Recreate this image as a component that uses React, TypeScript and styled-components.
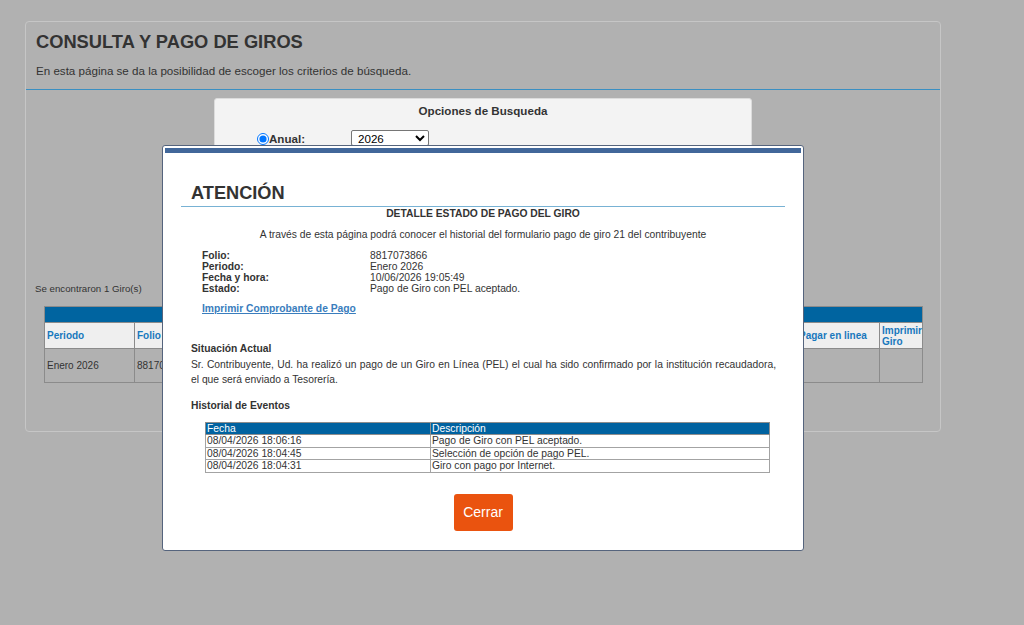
import { createGlobalStyle } from 'styled-components';
import styled from 'styled-components';

export default App;

type Evento = { fecha: string; descripcion: string };

const eventos: Evento[] = [
   { fecha: '08/04/2026 18:06:16', descripcion: 'Pago de Giro con PEL aceptado.' },
   { fecha: '08/04/2026 18:04:45', descripcion: 'Selección de opción de pago PEL.' },
   { fecha: '08/04/2026 18:04:31', descripcion: 'Giro con pago por Internet.' },
];

const detalle: [string, string][] = [
   ['Folio:', '8817073866'],
   ['Periodo:', 'Enero 2026'],
   ['Fecha y hora:', '10/06/2026 19:05:49'],
   ['Estado:', 'Pago de Giro con PEL aceptado.'],
];

// anchos de columna de la grilla de giros
const columnas = [
   { titulo: 'Periodo', ancho: 90 },
   { titulo: 'Folio', ancho: 80 },
   { titulo: 'Monto', ancho: 120 },
   { titulo: 'Vencimiento', ancho: 120 },
   { titulo: 'Estado', ancho: 170 },
   { titulo: 'Detalle', ancho: 172 },
   { titulo: 'Pagar en linea', ancho: 83 },
   { titulo: 'Imprimir Giro', ancho: 43 },
];

function App() {
   return (
      <>
         <GlobalStyle />
         <Page>
            <Card>
               <CardHeader>
                  <Title>CONSULTA Y PAGO DE GIROS</Title>
                  <Subtitle>
                     En esta página se da la posibilidad de escoger los criterios de búsqueda.
                  </Subtitle>
               </CardHeader>

               <SearchBox>
                  <SearchTitle>Opciones de Busqueda</SearchTitle>
                  <SearchRow>
                     <RadioLabel>
                        <input type='radio' name='tipo' defaultChecked />
                        Anual:
                     </RadioLabel>
                     <YearSelect defaultValue='2026'>
                        <option>2026</option>
                        <option>2025</option>
                     </YearSelect>
                  </SearchRow>
               </SearchBox>

               <ResultCount>Se encontraron 1 Giro(s)</ResultCount>

               <GirosTable>
                  <colgroup>
                     {columnas.map((c) => (
                        <col key={c.titulo} style={{ width: c.ancho }} />
                     ))}
                  </colgroup>
                  <thead>
                     <tr>
                        <BlueBar colSpan={columnas.length} />
                     </tr>
                     <tr>
                        {columnas.map((c) => (
                           <GiroTh key={c.titulo}>{c.titulo}</GiroTh>
                        ))}
                     </tr>
                  </thead>
                  <tbody>
                     <tr>
                        <GiroTd>Enero 2026</GiroTd>
                        <GiroTd>8817073866</GiroTd>
                        <GiroTd />
                        <GiroTd />
                        <GiroTd />
                        <GiroTd />
                        <GiroTd />
                        <GiroTd />
                     </tr>
                  </tbody>
               </GirosTable>
            </Card>
         </Page>

         <Modal>
            <ModalBar />
            <ModalHeader>
               <ModalTitle>ATENCIÓN</ModalTitle>
            </ModalHeader>
            <ModalBody>
               <SectionTitle>DETALLE ESTADO DE PAGO DEL GIRO</SectionTitle>
               <Intro>
                  A través de esta página podrá conocer el historial del formulario pago de giro 21 del
                  contribuyente
               </Intro>

               <DetailList>
                  {detalle.map(([label, value]) => (
                     <DetailRow key={label}>
                        <DetailLabel>{label}</DetailLabel>
                        <span>{value}</span>
                     </DetailRow>
                  ))}
               </DetailList>

               <PrintLink href='#'>Imprimir Comprobante de Pago</PrintLink>

               <BlockTitle $top={27}>Situación Actual</BlockTitle>
               <Situacion>
                  Sr. Contribuyente, Ud. ha realizó un pago de un Giro en Línea (PEL) el cual ha sido
                  confirmado por la institución recaudadora, el que será enviado a Tesorería.
               </Situacion>

               <BlockTitle $top={12}>Historial de Eventos</BlockTitle>
               <EventTable>
                  <thead>
                     <tr>
                        <EventTh style={{ width: 222 }}>Fecha</EventTh>
                        <EventTh>Descripción</EventTh>
                     </tr>
                  </thead>
                  <tbody>
                     {eventos.map((e) => (
                        <tr key={e.fecha}>
                           <EventTd>{e.fecha}</EventTd>
                           <EventTd>{e.descripcion}</EventTd>
                        </tr>
                     ))}
                  </tbody>
               </EventTable>

               <Actions>
                  <CloseButton>Cerrar</CloseButton>
               </Actions>
            </ModalBody>
         </Modal>
      </>
   );
}

const GlobalStyle = createGlobalStyle`
   html, body {
      margin: 0;
      background: #b1b1b1;
      font-family: 'Liberation Sans', Arial, sans-serif;
      color: #333;
   }
`;

const Page = styled.div`
   padding: 21px 25px;
   min-height: 583px;
`;

const Card = styled.div`
   width: 914px;
   height: 409px;
   border: 1px solid #c6c6c6;
   border-radius: 4px;
`;

const CardHeader = styled.div`
   padding: 8px 10px 11px;
   border-bottom: 1px solid #3a8fc2;
`;

const Title = styled.h1`
   margin: 0;
   font-size: 18.3px;
   line-height: 24px;
   font-weight: bold;
   color: #333;
`;

const Subtitle = styled.p`
   margin: 10px 0 0;
   font-size: 11.6px;
   line-height: 14px;
   color: #333;
`;

const SearchBox = styled.div`
   width: 536px;
   height: 158px;
   margin: 8px auto 0;
   background: #f3f3f3;
   border: 1px solid #dcdcdc;
   border-radius: 3px;
`;

const SearchTitle = styled.div`
   padding-top: 5px;
   font-size: 11.6px;
   line-height: 14px;
   font-weight: bold;
   text-align: center;
`;

const SearchRow = styled.div`
   display: flex;
   align-items: flex-start;
   gap: 2px;
   padding: 12px 0 0 42px;
`;

const RadioLabel = styled.label`
   display: flex;
   align-items: center;
   width: 92px;
   padding-top: 2px;
   font-size: 11.6px;
   font-weight: bold;

   input {
      margin: 0;
      width: 12px;
      height: 12px;
   }
`;

const YearSelect = styled.select`
   width: 78px;
   height: 16px;
   padding: 0 2px;
   font-family: 'Liberation Sans', Arial, sans-serif;
   font-size: 11.6px;
   border: 1px solid #767676;
   border-radius: 2px;
   background: #fff;
`;

const ResultCount = styled.p`
   margin: 24px 0 0 9px;
   font-size: 9.7px;
   line-height: 14px;
`;

const GirosTable = styled.table`
   margin: 10px 0 0 18px;
   width: 878px;
   border-collapse: collapse;
   table-layout: fixed;
`;

const BlueBar = styled.th`
   height: 15px;
   padding: 0;
   background: #0064a0;
   border: 1px solid #8b8b8b;
`;

const GiroTh = styled.th`
   height: 25px;
   padding: 0 2px;
   background: #efefef;
   border: 1px solid #8b8b8b;
   color: #1878bd;
   font-size: 10px;
   line-height: 11px;
   text-align: left;
`;

const GiroTd = styled.td`
   height: 33px;
   padding: 0 2px;
   border: 1px solid #8b8b8b;
   font-size: 10px;
   overflow: hidden;
   white-space: nowrap;
`;

const Modal = styled.div`
   position: absolute;
   left: 162px;
   top: 145px;
   width: 640px;
   height: 404px;
   background: #fff;
   border: 1px solid #55647d;
   border-radius: 3px;
`;

const ModalBar = styled.div`
   height: 5px;
   margin: 2px 2px 0;
   background: #41679a;
`;

const ModalHeader = styled.div`
   margin: 28px 18px 0 18px;
   padding: 0 10px 1px;
   border-bottom: 1px solid #78b2d4;
`;

const ModalTitle = styled.h2`
   margin: 0;
   font-size: 18.2px;
   line-height: 24px;
   font-weight: bold;
   color: #333;
`;

const ModalBody = styled.div`
   padding: 0 27px 0 28px;
   font-size: 10.3px;
   color: #333;
`;

const SectionTitle = styled.div`
   margin-left: -10px;
   margin-right: -9px;
   font-weight: bold;
   line-height: 13px;
   text-align: center;
`;

const Intro = styled.p`
   margin: 8px -9px 0 -10px;
   line-height: 13px;
   text-align: center;
`;

const DetailList = styled.div`
   margin: 9px 0 0 11px;
   display: grid;
`;

const DetailRow = styled.div`
   display: grid;
   grid-template-columns: 168px 1fr;
   line-height: 11px;
`;

const DetailLabel = styled.span`
   font-weight: bold;
`;

const PrintLink = styled.a`
   display: inline-block;
   margin: 8px 0 0 11px;
   font-weight: bold;
   line-height: 13px;
   color: #3a7dbd;
   text-decoration: underline;
`;

const BlockTitle = styled.div<{ $top: number }>`
   margin-top: ${(p) => p.$top}px;
   font-weight: bold;
   line-height: 13px;
`;

const Situacion = styled.p`
   margin: 2px 0 0;
   line-height: 15px;
   text-align: justify;
`;

const EventTable = styled.table`
   margin: 10px 0 0 14px;
   width: 565px;
   border-collapse: collapse;
   font-size: 10.3px;
`;

const EventTh = styled.th`
   padding: 0 1px;
   height: 11px;
   line-height: 11px;
   background: #0062a0;
   color: #fff;
   font-weight: normal;
   text-align: left;
   border: 1px solid #8d8d8d;
`;

const EventTd = styled.td`
   padding: 0 1px;
   height: 11.5px;
   line-height: 11.5px;
   border: 1px solid #a3a3a3;
`;

const Actions = styled.div`
   display: flex;
   justify-content: center;
   margin-top: 21px;
   padding-right: 1px;
`;

const CloseButton = styled.button`
   width: 59px;
   height: 37px;
   border: none;
   border-radius: 3px;
   background: #ea530f;
   color: #fff;
   font-family: 'Liberation Sans', Arial, sans-serif;
   font-size: 14px;
   cursor: pointer;
`;
